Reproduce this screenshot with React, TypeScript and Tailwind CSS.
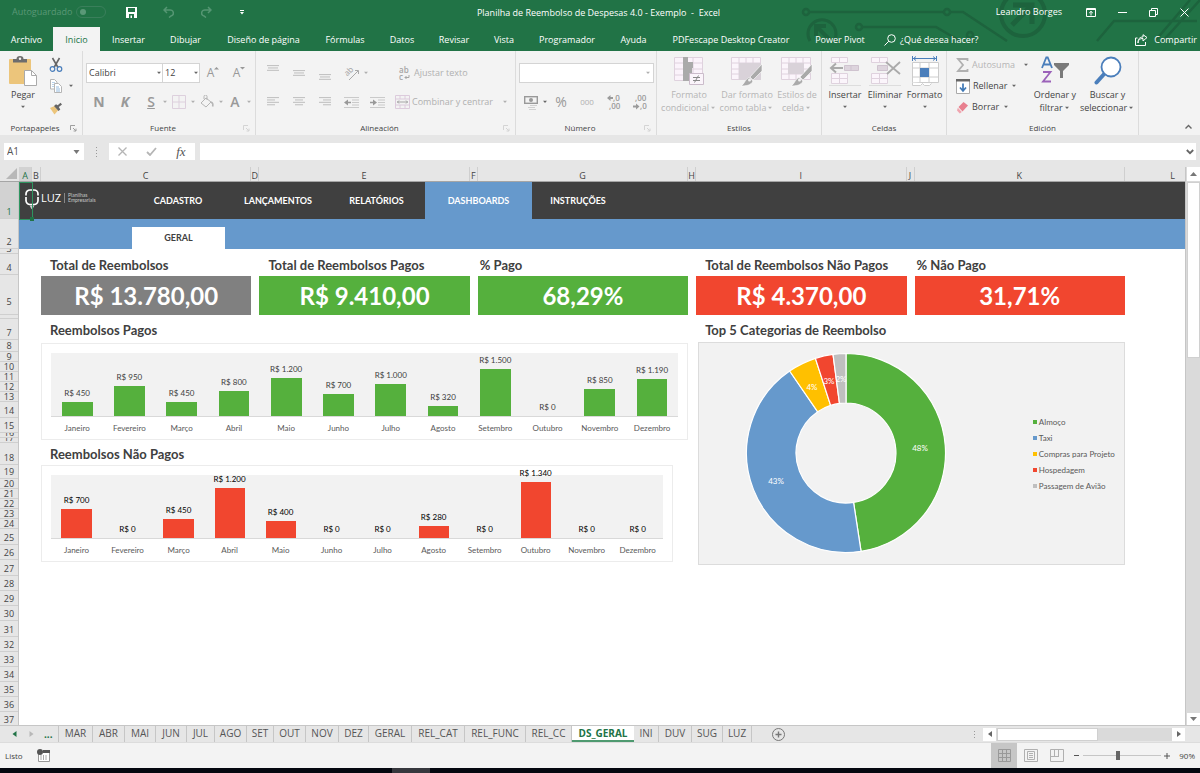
import type { ReactNode } from 'react';

/* ------------------------------------------------------------------ data */

const MENU: { label: string; width: string; active?: boolean }[] = [
  { label: 'Archivo', width: 'w-[53px]' },
  { label: 'Inicio', width: 'w-[47px]', active: true },
  { label: 'Insertar', width: 'w-[57px]' },
  { label: 'Dibujar', width: 'w-[57px]' },
  { label: 'Diseño de página', width: 'w-[99px]' },
  { label: 'Fórmulas', width: 'w-16' },
  { label: 'Datos', width: 'w-[50px]' },
  { label: 'Revisar', width: 'w-[54px]' },
  { label: 'Vista', width: 'w-[46px]' },
  { label: 'Programador', width: 'w-20' },
  { label: 'Ayuda', width: 'w-[53px]' },
  { label: 'PDFescape Desktop Creator', width: 'w-[142px]' },
  { label: 'Power Pivot', width: 'w-[76px]' },
];

const SHORT = 'h-2.5 leading-[9px]';
const NORMAL = 'h-[15px] leading-3';

const ROWS: [string, string][] = [
  ['1', 'h-[37px] leading-3'], ['2', 'h-[30px] leading-3'], ['3', 'h-[5px] leading-[9px]'], ['4', 'h-[21px] leading-3'], ['5', 'h-10 leading-6'],
  ['', 'h-1'], ['7', 'h-[21px] leading-3'], ['8', 'h-3 leading-[11px]'], ['9', SHORT], ['10', SHORT],
  ['11', SHORT], ['12', SHORT], ['13', SHORT], ['14', 'h-4 leading-3'], ['15', NORMAL],
  ['16', 'h-[5px] leading-[9px]'], ['17', 'h-[5px] leading-[9px]'], ['18', 'h-[22px] leading-3'], ['19', 'h-[14px] leading-3'], ['20', SHORT],
  ['21', SHORT], ['22', SHORT], ['23', SHORT], ['24', SHORT], ['25', 'h-4 leading-3'],
  ['26', NORMAL], ['27', 'h-4 leading-3'], ['28', NORMAL], ['29', NORMAL], ['30', NORMAL],
  ['31', 'h-4 leading-3'], ['32', NORMAL], ['33', NORMAL], ['34', NORMAL], ['35', NORMAL],
  ['36', NORMAL], ['37', NORMAL],
];

const SHEETS: { label: string; width: string; active?: boolean }[] = [
  { label: 'MAR', width: 'w-[34px]' },
  { label: 'ABR', width: 'w-8' },
  { label: 'MAI', width: 'w-[31px]' },
  { label: 'JUN', width: 'w-[31px]' },
  { label: 'JUL', width: 'w-7' },
  { label: 'AGO', width: 'w-8' },
  { label: 'SET', width: 'w-[27px]' },
  { label: 'OUT', width: 'w-8' },
  { label: 'NOV', width: 'w-[33px]' },
  { label: 'DEZ', width: 'w-[30px]' },
  { label: 'GERAL', width: 'w-[43px]' },
  { label: 'REL_CAT', width: 'w-[53px]' },
  { label: 'REL_FUNC', width: 'w-[61px]' },
  { label: 'REL_CC', width: 'w-[46px]' },
  { label: 'DS_GERAL', width: 'w-[62px]', active: true },
  { label: 'INI', width: 'w-[25px]' },
  { label: 'DUV', width: 'w-[33px]' },
  { label: 'SUG', width: 'w-[31px]' },
  { label: 'LUZ', width: 'w-[29px]' },
];

const MONTHS = ['Janeiro', 'Fevereiro', 'Março', 'Abril', 'Maio', 'Junho', 'Julho', 'Agosto', 'Setembro', 'Outubro', 'Novembro', 'Dezembro'];
const PAID = [450, 950, 450, 800, 1200, 700, 1000, 320, 1500, 0, 850, 1190];
const UNPAID = [700, 0, 450, 1200, 400, 0, 0, 280, 0, 1340, 0, 0];

const KPIS = [
  { title: 'Total de Reembolsos', value: 'R$ 13.780,00', titleStyle: 'col-start-3 pl-[9px]', style: 'bg-[#808080] col-start-3' },
  { title: 'Total de Reembolsos Pagos', value: 'R$ 9.410,00', titleStyle: 'col-start-5 pl-[9px]', style: 'bg-[#55b03d] col-start-5' },
  { title: '% Pago', value: '68,29%', titleStyle: 'col-start-7 pl-0.5', style: 'bg-[#55b03d] col-start-7' },
  { title: 'Total de Reembolsos Não Pagos', value: 'R$ 4.370,00', titleStyle: 'col-start-9 pl-[9px]', style: 'bg-[#f1462f] col-start-9' },
  { title: '% Não Pago', value: '31,71%', titleStyle: 'col-start-11 pl-0.5', style: 'bg-[#f1462f] col-start-11' },
];

const SLICES = [
  { label: 'Almoço', pct: '48%', from: 0, to: 171.3, color: '#55b03d', dot: 'bg-[#55b03d]', x: 74, y: -5 },
  { label: 'Taxi', pct: '43%', from: 171.3, to: 325.5, color: '#6699cc', dot: 'bg-[#6699cc]', x: -70, y: 28 },
  { label: 'Compras para Projeto', pct: '4%', from: 325.5, to: 342.1, color: '#ffc000', dot: 'bg-[#ffc000]', x: -34, y: -66 },
  { label: 'Hospedagem', pct: '3%', from: 342.1, to: 352.5, color: '#f1462f', dot: 'bg-[#f1462f]', x: -17, y: -72 },
  { label: 'Passagem de Avião', pct: '2%', from: 352.5, to: 360, color: '#bfbfbf', dot: 'bg-[#bfbfbf]', x: -5, y: -74 },
];

const SHEET_COLS = 'grid grid-cols-[13px_9px_210fr_8px_210fr_8px_210fr_8px_210fr_8px_210fr_60fr]';

const money = (n: number) => 'R$ ' + n.toString().replace(/(\d)(\d{3})$/, '$1.$2');

/* --------------------------------------------------------------- helpers */

function Arrow({ className = 'text-[#666]' }: { className?: string }) {
  return (
    <svg width="8" height="4" viewBox="0 0 8 4" className={className}>
      <path d="M2 0.8h4L4 3z" fill="currentColor" />
    </svg>
  );
}

function Launcher({ className }: { className: string }) {
  return (
    <svg width="7" height="7" viewBox="0 0 7 7" className={className} fill="none" stroke="currentColor">
      <path d="M0.5 5V0.5H5M3 3l2.500 2.500M6 3.6v2.4H3.6" strokeWidth=".8" />
    </svg>
  );
}

function Group({ label, className, launcher, children }: { label: string; className: string; launcher?: string; children: ReactNode }) {
  return (
    <section className={`${className} flex shrink-0 flex-col border-r border-[#dcdcdc]`}>
      <div className="flex h-[70px]">{children}</div>
      <div className="flex h-[14px] items-center">
        <h2 className="flex-1 text-center text-[8px] leading-3 text-[#444]">{label}</h2>
        {launcher && <button aria-label={`Opciones de ${label}`} className="w-3"><Launcher className={launcher} /></button>}
      </div>
    </section>
  );
}

function Tool({ label, className = 'w-[26px]', children }: { label: string; className?: string; children: ReactNode }) {
  return (
    <button aria-label={label} className={`${className} flex h-5 shrink-0 items-center justify-center`}>
      {children}
    </button>
  );
}

function SplitTool({ label, arrow = 'text-[#b0b0b0]', children }: { label: string; arrow?: string; children: ReactNode }) {
  return (
    <button aria-label={label} className="flex h-5 w-7 shrink-0 items-center">
      <span className="flex w-5 justify-center">{children}</span>
      <Arrow className={arrow} />
    </button>
  );
}

function BigButton({ icon, lines, className, arrowInline, muted }: { icon: ReactNode; lines: string[]; className: string; arrowInline?: boolean; muted?: boolean }) {
  return (
    <button className={`${className} flex shrink-0 flex-col items-center whitespace-nowrap pt-1 text-[9px] leading-[13px]`}>
      <span className="flex h-[33px] items-start pt-px">{icon}</span>
      <span>{lines[0]}</span>
      {arrowInline ? (
        <span className="flex items-center">{lines[1]}<Arrow className={muted ? 'text-[#b5b5b5]' : 'text-[#666]'} /></span>
      ) : (
        <span className="flex h-3 items-center"><Arrow /></span>
      )}
    </button>
  );
}

function Lines({ y, kind }: { y: number; kind: 'thin' | 'left' | 'center' | 'right' }) {
  const rows = kind === 'thin' ? [[0, 12], [1, 10], [0, 12]]
    : kind === 'left' ? [[0, 12], [0, 8], [0, 12], [0, 8]]
      : kind === 'center' ? [[0, 12], [2, 8], [0, 12], [2, 8]]
        : [[0, 12], [4, 8], [0, 12], [4, 8]];
  return (
    <svg width="12" height="20" viewBox="0 0 12 20" fill="#c3c3c3">
      {rows.map(([x, w], i) => <rect key={i} x={x} y={y + i * 2.4} width={w} height="1.1" />)}
    </svg>
  );
}

/* ----------------------------------------------------------------- icons */

const PasteIcon = () => (
  <svg width="30" height="32" viewBox="0 0 30 32">
    <rect x="1" y="3" width="22" height="25" rx="1" fill="#ecc57b" />
    <path d="M5 6.500V3h3.500A3.500 3 0 0 1 15.500 3H19v3.500z" fill="#6d6d6d" />
    <circle cx="12" cy="2.800" r="1.200" fill="#f3f3f3" />
    <path d="M16.500 14.500h7l5 5v10h-12z" fill="#fff" stroke="#aaa" />
    <path d="M23.500 14.500v5h5" fill="none" stroke="#aaa" />
  </svg>
);
const CutIcon = () => (
  <svg width="14" height="16" viewBox="0 0 14 16" fill="none">
    <path d="M3.500 1l5.500 9.500M10.500 1L5 10.500" stroke="#666" strokeWidth="1.600" />
    <circle cx="3.500" cy="12" r="2.300" stroke="#4a7ebb" strokeWidth="1.200" />
    <circle cx="10.500" cy="12" r="2.300" stroke="#4a7ebb" strokeWidth="1.200" />
  </svg>
);
const CopyIcon = () => (
  <svg width="14" height="16" viewBox="0 0 14 16" stroke="#b5b5b5" fill="#fff">
    <path d="M1.500 1.500h4l2.500 2.500v7h-6.500z" />
    <path d="M3 4.500h3M3 6.500h3M3 8.500h3" stroke="#b9d2ea" />
    <path d="M5.500 5.500h4l3 3v6h-7z" />
    <path d="M7 9h3M7 11h4M7 13h4" stroke="#b9d2ea" strokeWidth="1.700" />
  </svg>
);
const BrushIcon = () => (
  <svg width="14" height="13" viewBox="0 0 14 13">
    <path d="M1 6l4.500-2L9 8.500 5.500 12.500z" fill="#ecc57b" />
    <path d="M5 4l4.500 5 1.800-1.500-1.500-2.500 3.200-2.500L11.500.7 8.700 3.200 7 2.200z" fill="#666" />
  </svg>
);
const BordersIcon = () => (
  <svg width="14" height="14" viewBox="0 0 14 14" fill="none" stroke="#ddd0dd">
    <path d="M.5.5h13v13H.5zM7 0v14M0 7h14" />
  </svg>
);
const FillIcon = () => (
  <svg width="14" height="14" viewBox="0 0 14 14" fill="none" stroke="#b5b5b5">
    <path d="M1 8l5-5 5 4-5 5zM4 4V1.500a1.500 1.500 0 0 1 3 0V5" />
    <path d="M11 7c2 1 2.300 3 1.500 4.500" strokeWidth="1.600" />
  </svg>
);
const OrientationIcon = () => (
  <svg width="16" height="16" viewBox="0 0 16 16" fill="none" stroke="#a9a9a9" className="overflow-visible">
    <text x="1" y="10" transform="rotate(-45 4 8)" fontSize="8" fill="#a0a0a0" stroke="none" fontFamily="Open Sans, sans-serif">ab</text>
    <path d="M5 15l9-9M11 5.500h3.500V9" />
  </svg>
);
const IndentIcon = ({ right }: { right?: boolean }) => (
  <svg width="15" height="11" viewBox="0 0 15 11" fill="#cacaca">
    <path d="M0 0h15v1H0zM8 2.500h7v1H8zM8 5h7v1H8zM8 7.500h7v1H8zM0 10h15v1H0z" />
    {right ? <path d="M0 4.800h3V2.500L7 5.500 3 8.500V6.200H0z" fill="#999" /> : <path d="M7 4.800H4V2.500L0 5.500l4 3V6.200h3z" fill="#999" />}
  </svg>
);
const WrapIcon = () => (
  <svg width="11" height="15" viewBox="0 0 11 15" className="overflow-visible">
    <text x="0" y="7" fontSize="8" fontWeight="600" fill="#a5a5a5" fontFamily="Open Sans, sans-serif">ab</text>
    <text x="0" y="14" fontSize="8" fontWeight="600" fill="#a5a5a5" fontFamily="Open Sans, sans-serif">c</text>
    <path d="M10 9v2.500H6M7.500 10L6 11.500 7.500 13" fill="none" stroke="#a5a5a5" />
  </svg>
);
const MergeIcon = () => (
  <svg width="15" height="14" viewBox="0 0 15 14" fill="none" stroke="#dccbdc">
    <path d="M.5.5h14v13H.5zM0 4h15M0 10h15M5 0v4M10 0v4M5 10v4M10 10v4" />
    <path d="M2 7h11M4 5.500L2.500 7 4 8.500M11 5.500L12.500 7 11 8.500" stroke="#a5a5a5" />
  </svg>
);
const MoneyIcon = () => (
  <svg width="14" height="15" viewBox="0 0 14 15">
    <rect x=".7" y="1.700" width="12.600" height="6.600" fill="none" stroke="#999" strokeWidth="1.400" />
    <circle cx="7" cy="5" r="2" fill="#999" />
    <path d="M6 10h7v1H6zM4 12h7v1H4zM5 14h7v1H5z" fill="#d0d0d0" />
  </svg>
);
const DecimalIcon = ({ less }: { less?: boolean }) => (
  <svg width="16" height="18" viewBox="0 0 16 18" fill="#9b9b9b" fontFamily="Open Sans, sans-serif" fontSize="8" fontWeight="600" className="overflow-visible">
    <text x={less ? 3 : 7} y="8">{less ? ',00' : ',0'}</text>
    <text x={less ? 8 : 3} y="16">{less ? ',0' : ',00'}</text>
    {less ? <path d="M1 12.500h3v-2l3.500 3-3.500 3v-2H1z" /> : <path d="M7 4H4.500V2L1 5l3.500 3V6H7z" />}
  </svg>
);
const CondIcon = () => (
  <svg width="30" height="30" viewBox="0 0 30 30">
    <path d="M.5 1.500h28v23H.5zM0 7h29M0 13h29M0 19h29M10 1v24M19 1v24" fill="#fbf3fb" stroke="#dfd2de" />
    <path d="M9 1h5v5h5v6h-1v6h-3v7H9z" fill="#aaa" />
    <path d="M15.500 17.500h14v11h-14z" fill="#fbf5fb" stroke="#cbbccb" />
    <path d="M19 21.500h7M19 24.500h7M24.500 19.500l-4 7" stroke="#888" />
  </svg>
);
const TableFormatIcon = ({ cell }: { cell?: boolean }) => (
  <svg width="32" height="31" viewBox="0 0 32 31">
    <path d="M.5 1.500h29v22H.5zM0 7h30M0 13h30M0 18h30M8 1v23M15 1v23M22 1v23" fill="#fbf5fb" stroke="#dfd2de" />
    <path d={cell ? 'M7 7h16v11H7z' : 'M8 7h22v17H8z'} fill="#d9d2d9" />
    <path d="M31 8v7l-9 9-3-3z" fill="#aaa" stroke="#fff" strokeWidth=".6" />
    <path d="M18 21.500l4 3.500c-2 4.500-7 5-12 5 3-1 4-7 8-8.500z" fill="#aaa" stroke="#fff" strokeWidth=".6" />
    <circle cx="18.500" cy="24" r="1.500" fill="#f3f3f3" />
  </svg>
);
const InsertCellsIcon = ({ remove }: { remove?: boolean }) => (
  <svg width="32" height="30" viewBox="0 0 32 30">
    <path d="M2.500 1.500h16v5h-16zM10.500 1v6M2.500 17.500h16v10h-16zM10.500 17v11M2 22.500h17" fill="#fbf5fb" stroke="#dfd2de" />
    <path d={remove ? 'M8.500 9.500h10v5h-10z' : 'M15.500 9.500h14v5h-14zM22 9v6'} fill="#ddd4dd" stroke="#cfc3cf" />
    {remove
      ? <path d="M17 6l14 12M31 6L18 18" fill="none" stroke="#aaa" strokeWidth="1.800" />
      : <path d="M14 12H2M7 7.500L2 12l5 4.500" fill="none" stroke="#aaa" strokeWidth="2" />}
    <path d="M0 29.500h32" stroke="#ddd" />
  </svg>
);
const FormatCellsIcon = () => (
  <svg width="28" height="31" viewBox="0 0 28 31">
    <path d="M1.500 0v5M25.500 0v5M2 2.500h23M5 .5l-2.500 2 2.500 2M22 .5l2.500 2-2.500 2" fill="none" stroke="#4a7ebb" />
    <path d="M1.500 6.500h26v20H1.500zM1 12h27M1 21h27M9 6v21M18 6v21" fill="#fff" stroke="#ccc" />
    <path d="M9 12h9v9H9z" fill="#4a7ebb" />
    <path d="M1.500 26.500v3h8l2-2 2 2h5l2-2" fill="#fff" stroke="#ccc" />
  </svg>
);
const SumIcon = () => (
  <svg width="13" height="14" viewBox="0 0 13 14" fill="none" stroke="#b0b0b0" strokeWidth="1.800">
    <path d="M11.500 3V1H2l5 6-5 6h9.500v-2" />
  </svg>
);
const FillDownIcon = () => (
  <svg width="14" height="15" viewBox="0 0 14 15">
    <path d="M.5 1.500h13v13H.5z" fill="#fff" stroke="#aaa" />
    <path d="M0 0h14v2.500H0z" fill="#666" />
    <path d="M7 4.500v7M4 8.500l3 3.500 3-3.500" fill="none" stroke="#3f78b5" strokeWidth="1.700" />
  </svg>
);
const EraserIcon = () => (
  <svg width="13" height="13" viewBox="0 0 13 13">
    <path d="M7.500 1L12 4.500 6.500 10.500 2.500 6z" fill="#e8808f" />
    <path d="M1.800 6.700l4 4.300-2 1.500L1 9.500z" fill="#f0a5af" />
  </svg>
);
const SortIcon = () => (
  <svg width="28" height="28" viewBox="0 0 28 28">
    <path d="M1 12L5.300 1.500h1.400L11 12M2.800 8.500h6.400" fill="none" stroke="#4a7ebb" strokeWidth="1.800" />
    <path d="M2 16h7.500L2 25.500h8" fill="none" stroke="#9b62b9" strokeWidth="1.800" />
    <path d="M13 7h15v2l-6 6v7h-3v-7l-6-6z" fill="#7a7a7a" />
  </svg>
);
const FindIcon = () => (
  <svg width="28" height="29" viewBox="0 0 28 29">
    <path d="M2.500 26.500l9-10" stroke="#4a7ebb" strokeWidth="4" strokeLinecap="round" />
    <circle cx="17" cy="11" r="9.500" fill="#fff" stroke="#4a7ebb" strokeWidth="1.800" />
  </svg>
);

/* ---------------------------------------------------------------- header */

function Circuits() {
  return (
    <svg className="pointer-events-none absolute top-0 right-0" width="400" height="42" viewBox="0 0 400 42" fill="none" stroke="#1d633d" strokeWidth="2.500">
      <circle cx="6" cy="12" r="3" />
      <path d="M9 12h135M150 12h13l44 29" />
      <circle cx="147" cy="12" r="3" />
      <circle cx="59" cy="27" r="3" />
      <path d="M62 27h74l24 14" />
      <circle cx="170" cy="35" r="3" />
      <path d="M10 41A14 14 0 1 1 34 41" strokeWidth="3" />
      <path d="M30 40L17 27M16 36V26h10" strokeWidth="4" />
      <circle cx="223" cy="14" r="22" strokeWidth="4" />
      <path d="M212 25l18-18M213 5h19v19" strokeWidth="5" />
      <path d="M297 41l17-20h83M355 41L390 0M363 41L400 0" />
    </svg>
  );
}

function TitleBar() {
  return (
    <div className="relative flex h-[27px] items-center pb-[3px] text-[9px]">
      <label className="flex w-[107px] items-center gap-1 pl-3 text-[#5a9877]">
        Autoguardado
        <input
          type="checkbox"
          role="switch"
          className="flex h-3 w-[30px] appearance-none items-center rounded-full border border-[#3a7f5b] pl-[3px] before:size-1.5 before:rounded-full before:bg-[#5a9877]"
        />
      </label>
      <button aria-label="Guardar" className="flex w-12 justify-center">
        <svg width="11" height="11" viewBox="0 0 11 11"><path d="M0 0h11v11H0zM2 1v4h7V1zM3 7v4h1.500V8.500H6V11h2V7z" fill="#fff" fillRule="evenodd" /></svg>
      </button>
      <button aria-label="Deshacer" className="flex w-[27px] justify-center">
        <svg width="11" height="12" viewBox="0 0 11 12" fill="none" stroke="#559673" strokeWidth="1.500"><path d="M4 1L1 4l3 3M1 4h5.500a3 3 0 0 1 1.500 6L6 11.500" /></svg>
      </button>
      <button aria-label="Rehacer" className="flex w-[48px] justify-center">
        <svg width="11" height="12" viewBox="0 0 11 12" fill="none" stroke="#559673" strokeWidth="1.500"><path d="M7 1l3 3-3 3M10 4H4.500A3 3 0 0 0 3 10l2 1.500" /></svg>
      </button>
      <button aria-label="Personalizar barra" className="flex w-6 justify-center">
        <svg width="4" height="5" viewBox="0 0 4 5" fill="#fff"><path d="M0 0h4v1H0zM0 2h4L2 4.500z" /></svg>
      </button>
      <h1 className="flex-1 pt-0.5 text-center whitespace-pre">Planilha de Reembolso de Despesas 4.0 - Exemplo  -  Excel</h1>
      <div className="flex w-[257px] shrink-0 items-center">
        <span className="w-[119px] text-right">Leandro Borges</span>
        <div className="flex flex-1 items-center justify-between pr-[11px] pl-6">
          <button aria-label="Opciones de la cinta">
            <svg width="10" height="9" viewBox="0 0 10 9" fill="none" stroke="#fff"><path d="M.5.5h9v8h-9zM0 1.500h10M5 7.500V3.500M3.200 5L5 3.300 6.800 5" /></svg>
          </button>
          <button aria-label="Minimizar">
            <svg width="9" height="9" viewBox="0 0 9 9" stroke="#fff"><path d="M0 4.500h9" /></svg>
          </button>
          <button aria-label="Restaurar">
            <svg width="9" height="9" viewBox="0 0 9 9" fill="none" stroke="#fff"><path d="M.5 2.500h6v6h-6zM2.500 2V.5h6v6H7" /></svg>
          </button>
          <button aria-label="Cerrar">
            <svg width="9" height="9" viewBox="0 0 9 9" stroke="#fff"><path d="M.5.5l8 8M8.500.5l-8 8" /></svg>
          </button>
        </div>
      </div>
    </div>
  );
}

function MenuBar() {
  return (
    <nav className="relative flex h-6 items-stretch text-[9px]">
      {MENU.map((m) => (
        <button key={m.label} className={`${m.width} shrink-0 pt-0.5 whitespace-nowrap ${m.active ? 'bg-[#f3f3f3] text-[#217346]' : ''}`}>
          {m.label}
        </button>
      ))}
      <button className="flex items-center gap-1 pt-0.5 pl-1.5">
        <svg width="12" height="12" viewBox="0 0 12 12" fill="none" stroke="#fff"><circle cx="7.500" cy="4.500" r="3.800" /><path d="M4.800 7.200L.5 11.500" /></svg>
        ¿Qué desea hacer?
      </button>
      <button className="ml-auto flex items-center gap-1.5 pt-0.5 pr-[3px]">
        <svg width="13" height="12" viewBox="0 0 13 12" fill="none" stroke="#fff"><path d="M2.500 4H.5v7.500h10V8M3 9c.3-3.500 2-4.500 5-4.500V7l4-3.500L8 .7V3C4.500 3 3 5 3 9z" /></svg>
        Compartir
      </button>
    </nav>
  );
}

/* ---------------------------------------------------------------- ribbon */

function Ribbon() {
  return (
    <div className="flex h-[84px] bg-[#f3f3f3] text-[#444]">
      <Group label="Portapapeles" className="w-[83px]" launcher="text-[#888]">
        <button className="flex w-[46px] flex-col items-center pt-[5px] text-[9px] leading-3">
          <PasteIcon />
          <span className="mt-px">Pegar</span>
          <span className="flex h-3 items-center"><Arrow /></span>
        </button>
        <div className="flex flex-col items-start gap-1 pt-1.5 pl-[3px]">
          <button aria-label="Cortar"><CutIcon /></button>
          <button aria-label="Copiar" className="flex items-center gap-1 pt-px"><CopyIcon /><Arrow /></button>
          <button aria-label="Copiar formato" className="pt-1"><BrushIcon /></button>
        </div>
      </Group>

      <Group label="Fuente" className="w-[173px]" launcher="text-[#ccc]">
        <div className="flex flex-col gap-[9px] pt-3 pl-[3px]">
          <div className="flex items-center">
            <div className="relative flex items-center">
              <select aria-label="Fuente" className="h-5 w-[77px] appearance-none border border-[#d4d4d4] bg-white pl-0.5 text-[9px]"><option>Calibri</option></select>
              <span className="pointer-events-none absolute right-0"><Arrow /></span>
            </div>
            <div className="relative flex items-center">
              <select aria-label="Tamaño" className="-ml-px h-5 w-[38px] appearance-none border border-[#d4d4d4] bg-white pl-0.5 text-[9px]"><option>12</option></select>
              <span className="pointer-events-none absolute right-0"><Arrow /></span>
            </div>
            <Tool label="Aumentar tamaño">
              <span className="text-xs text-[#999]">A</span>
              <svg width="5" height="12" viewBox="0 0 5 12" fill="#999"><path d="M2.500 0L5 2.500H0z" /></svg>
            </Tool>
            <Tool label="Reducir tamaño">
              <span className="text-xs text-[#999]">A</span>
              <svg width="5" height="12" viewBox="0 0 5 12" fill="#999"><path d="M0 0h5L2.500 2.500z" /></svg>
            </Tool>
          </div>
          <div className="flex gap-[3px] text-sm text-[#999]">
            <div className="flex">
              <Tool label="Negrita"><b>N</b></Tool>
              <Tool label="Cursiva"><b className="italic">K</b></Tool>
            </div>
            <div className="flex">
              <SplitTool label="Subrayado"><span className="font-semibold underline">S</span></SplitTool>
              <SplitTool label="Bordes"><BordersIcon /></SplitTool>
              <SplitTool label="Color de relleno"><FillIcon /></SplitTool>
              <SplitTool label="Color de fuente"><span className="font-semibold">A</span></SplitTool>
            </div>
          </div>
        </div>
      </Group>

      <Group label="Alineación" className="w-[260px]" launcher="text-[#ccc]">
        <div className="flex flex-col gap-[9px] pt-3 pl-1">
          <div className="flex">
            <Tool label="Alinear arriba"><Lines y={2} kind="thin" /></Tool>
            <Tool label="Alinear en medio"><Lines y={7} kind="thin" /></Tool>
            <Tool label="Alinear abajo"><Lines y={11} kind="thin" /></Tool>
            <div className="pl-1"><SplitTool label="Orientación"><OrientationIcon /></SplitTool></div>
          </div>
          <div className="flex">
            <Tool label="Alinear a la izquierda"><Lines y={5} kind="left" /></Tool>
            <Tool label="Centrar"><Lines y={5} kind="center" /></Tool>
            <Tool label="Alinear a la derecha"><Lines y={5} kind="right" /></Tool>
            <Tool label="Disminuir sangría"><IndentIcon /></Tool>
            <Tool label="Aumentar sangría"><IndentIcon right /></Tool>
          </div>
        </div>
        <div className="flex flex-col items-start gap-[9px] pt-3 pl-[5px] text-[9px] text-[#b0b0b0]">
          <button className="flex h-5 items-center gap-1 pl-1"><WrapIcon />Ajustar texto</button>
          <button className="flex h-5 items-center gap-0.5 whitespace-nowrap"><MergeIcon />Combinar y centrar<span className="pl-1.5"><Arrow className="text-[#b0b0b0]" /></span></button>
        </div>
      </Group>

      <Group label="Número" className="w-[141px]" launcher="text-[#ccc]">
        <div className="flex flex-col gap-[9px] pt-3 pl-[3px]">
          <div className="relative flex items-center">
            <select aria-label="Formato de número" className="h-5 w-[135px] appearance-none border border-[#d4d4d4] bg-white text-[9px]"><option></option></select>
            <span className="pointer-events-none absolute right-0.5"><Arrow className="text-[#b0b0b0]" /></span>
          </div>
          <div className="flex pl-0.5 text-[#999]">
            <SplitTool label="Formato de contabilidad" arrow="text-[#666]"><MoneyIcon /></SplitTool>
            <Tool label="Porcentaje" className="w-6"><span className="text-sm">%</span></Tool>
            <Tool label="Millares" className="w-7"><span className="text-[8px] text-[#b0b0b0]">000</span></Tool>
            <Tool label="Aumentar decimales"><DecimalIcon /></Tool>
            <Tool label="Disminuir decimales"><DecimalIcon less /></Tool>
          </div>
        </div>
      </Group>

      <Group label="Estilos" className="w-[165px]">
        <div className="flex text-[#b5b5b5]">
          <BigButton className="w-16" icon={<CondIcon />} lines={['Formato', 'condicional']} arrowInline muted />
          <BigButton className="w-[52px]" icon={<TableFormatIcon />} lines={['Dar formato', 'como tabla']} arrowInline muted />
          <BigButton className="w-[48px]" icon={<TableFormatIcon cell />} lines={['Estilos de', 'celda']} arrowInline muted />
        </div>
      </Group>

      <Group label="Celdas" className="w-[125px]">
        <div className="flex pl-[3px]">
          <BigButton className="w-10" icon={<InsertCellsIcon />} lines={['Insertar']} />
          <BigButton className="w-10" icon={<InsertCellsIcon remove />} lines={['Eliminar']} />
          <BigButton className="w-[39px]" icon={<FormatCellsIcon />} lines={['Formato']} />
        </div>
      </Group>

      <Group label="Edición" className="w-[192px]">
        <div className="flex w-[81px] flex-col items-start gap-px pt-1 pl-[9px] text-[9px]">
          <button className="flex h-5 items-center gap-[3px] text-[#b5b5b5]"><SumIcon />Autosuma<span className="pl-1"><Arrow /></span></button>
          <button className="flex h-5 items-center gap-[3px]"><FillDownIcon />Rellenar<Arrow /></button>
          <button className="flex h-5 items-center gap-[3px]"><EraserIcon />Borrar<Arrow /></button>
        </div>
        <BigButton className="w-[54px]" icon={<SortIcon />} lines={['Ordenar y', 'filtrar']} arrowInline />
        <BigButton className="w-[51px]" icon={<FindIcon />} lines={['Buscar y', 'seleccionar']} arrowInline />
      </Group>

      <div className="flex flex-1 items-end justify-end pr-2 pb-0.5">
        <button aria-label="Contraer la cinta">
          <svg width="7" height="10" viewBox="0 0 7 10" fill="none" stroke="#666" strokeWidth="1.400"><path d="M.5 5.500l3-3 3 3" /></svg>
        </button>
      </div>
    </div>
  );
}

function FormulaBar() {
  return (
    <div className="flex h-[17px] items-center gap-[5px] pr-1 pl-1 text-[#555]">
      <div className="relative flex h-full w-20 items-center bg-white">
        <input aria-label="Cuadro de nombres" defaultValue="A1" className="w-14 bg-transparent pl-[3px] text-[10px] outline-none" />
        <svg className="absolute right-1" width="7" height="4" viewBox="0 0 7 4" fill="#777"><path d="M.5 0h6L3.500 4z" /></svg>
      </div>
      <div className="flex w-[15px] flex-col items-center gap-[2px]">
        <span className="size-px bg-[#999]" /><span className="size-px bg-[#999]" /><span className="size-px bg-[#999]" /><span className="size-px bg-[#999]" />
      </div>
      <div className="flex h-full w-[86px] items-center justify-around bg-white">
        <button aria-label="Cancelar"><svg width="9" height="9" viewBox="0 0 9 9" stroke="#b5b5b5" strokeWidth="1.300"><path d="M.5.5l8 8M8.500.5l-8 8" /></svg></button>
        <button aria-label="Introducir"><svg width="11" height="9" viewBox="0 0 11 9" fill="none" stroke="#b5b5b5" strokeWidth="1.800"><path d="M1 5l3 3 6-7" /></svg></button>
        <button aria-label="Insertar función" className="font-['Liberation_Serif',serif] text-[13px] leading-4 italic">fx</button>
      </div>
      <div className="flex h-full flex-1 items-center bg-white">
        <input aria-label="Barra de fórmulas" className="min-w-0 flex-1 bg-transparent px-1 text-[10px] outline-none" />
        <button aria-label="Expandir" className="pr-0.5"><svg width="8" height="6" viewBox="0 0 8 6" fill="none" stroke="#666" strokeWidth="1.800"><path d="M.8 1L4 4.200 7.200 1" /></svg></button>
      </div>
    </div>
  );
}

/* ----------------------------------------------------------------- sheet */

function BarChart({ values, scale, barColor, labelColor, className }: { values: number[]; scale: number; barColor: string; labelColor: string; className: string }) {
  return (
    <div className={`${className} h-[97px] border border-[#ececec] bg-white px-[9px] pt-[9px] text-[8px] leading-[10px]`}>
      <div className="flex h-16 items-end border-b border-[#d9d9d9] bg-[#f2f2f2]">
        {values.map((v, i) => (
          <div key={MONTHS[i]} className="flex flex-1 flex-col items-center">
            <span className={`${labelColor} mb-1 whitespace-nowrap`}>{money(v)}</span>
            <div className={`${barColor} w-[59%]`} style={{ height: Math.round(v * scale) }} />
          </div>
        ))}
      </div>
      <div className="flex h-[21px] items-center text-[#595959]">
        {MONTHS.map((m) => <span key={m} className="flex-1 text-center">{m}</span>)}
      </div>
    </div>
  );
}

function arc(from: number, to: number, outer: number, inner: number) {
  const p = (deg: number, r: number) => {
    const a = ((deg - 90) * Math.PI) / 180;
    return `${(r * Math.cos(a)).toFixed(2)} ${(r * Math.sin(a)).toFixed(2)}`;
  };
  const big = to - from > 180 ? 1 : 0;
  return `M${p(from, outer)}A${outer} ${outer} 0 ${big} 1 ${p(to, outer)}L${p(to, inner)}A${inner} ${inner} 0 ${big} 0 ${p(from, inner)}Z`;
}

function DonutPanel() {
  return (
    <div className="flex h-[223px] items-center justify-between border border-[#dcdcdc] bg-[#f2f2f2] pr-[9px] pb-0.5 pl-[46px]">
      <svg width="202" height="202" viewBox="-101 -101 202 202" role="img" aria-label="Top 5 Categorias de Reembolso">
        {SLICES.map((s) => <path key={s.label} d={arc(s.from, s.to, 99.5, 50)} fill={s.color} stroke="#fff" strokeWidth="1.200" />)}
        {SLICES.map((s) => (
          <text key={s.label} x={s.x} y={s.y + 3} textAnchor="middle" fontSize="8" fill="#fff" fontFamily="Lato, sans-serif">{s.pct}</text>
        ))}
      </svg>
      <ul className="flex flex-col pt-0.5 text-[8px] leading-4 text-[#595959]">
        {SLICES.map((s) => (
          <li key={s.label} className="flex items-center gap-0.5"><span className={`${s.dot} size-1`} />{s.label}</li>
        ))}
      </ul>
    </div>
  );
}

function NavBar() {
  return (
    <nav className="flex h-[37px] bg-[#404040] text-[9px] font-bold text-white">
      <div className="flex w-[109px] items-start pt-[7px] pl-1.5">
        <svg width="14" height="21" viewBox="0 0 14 21" fill="none" stroke="#fff" strokeWidth="1.700">
          <path d="M1 6.500V5a4 4 0 0 1 4-4h4a4 4 0 0 1 4 4v1.500M13 8v3.500a4 4 0 0 1-4 4H5a4 4 0 0 1-4-4V8" />
          <path d="M4.500 16.500h5L7.500 20h-1z" fill="#ccc" stroke="none" />
        </svg>
        <span className="pt-[3px] pl-[2px] font-['Open_Sans',sans-serif] text-[11px] leading-3 font-normal">LUZ</span>
        <span className="mt-1 ml-[3px] border-l border-[#888] pl-[3px] text-[5px] leading-[5px] font-normal text-[#c8c8c8]">Planilhas<br />Empresariais</span>
      </div>
      <button className="w-[100px]">CADASTRO</button>
      <button className="w-[100px]">LANÇAMENTOS</button>
      <button className="w-[97px]">RELATÓRIOS</button>
      <button className="w-[107px] bg-[#6699cc]">DASHBOARDS</button>
      <button className="w-[92px]">INSTRUÇÕES</button>
    </nav>
  );
}

function Dashboard() {
  const heading = 'text-[13px] leading-[21px] font-bold whitespace-nowrap';
  return (
    <main className="relative min-w-0 flex-1 bg-white font-[Lato,sans-serif] text-[#404040]">
      <NavBar />
      <div className="flex h-[30px] items-end bg-[#6699cc] pl-[113px]">
        <button className="h-[22px] w-[93px] bg-white text-[9px] font-bold">GERAL</button>
      </div>
      <div className={`${SHEET_COLS} pt-1.5`}>
        {KPIS.map((k) => <h3 key={k.title} className={`${k.titleStyle} ${heading} row-start-1`}>{k.title}</h3>)}
        {KPIS.map((k) => (
          <p key={k.title} className={`${k.style} row-start-2 h-[39px] text-center text-2xl leading-[39px] font-bold text-white`}>{k.value}</p>
        ))}
      </div>
      <div className={`${SHEET_COLS} pt-[5px]`}>
        <section className="col-start-3 col-end-8">
          <h3 className={`${heading} pl-[9px]`}>Reembolsos Pagos</h3>
          <BarChart className="mt-0.5" values={PAID} scale={0.0315} barColor="bg-[#55b03d]" labelColor="text-[#404040]" />
          <h3 className={`${heading} mt-1 pl-[9px]`}>Reembolsos Não Pagos</h3>
          <BarChart className="mr-[15px]" values={UNPAID} scale={0.0417} barColor="bg-[#f1462f]" labelColor="text-black" />
        </section>
        <section className="col-start-9 col-end-12">
          <h3 className={`${heading} pl-[9px]`}>Top 5 Categorias de Reembolso</h3>
          <div className="mt-px ml-0.5"><DonutPanel /></div>
        </section>
      </div>
      <div className="pointer-events-none absolute top-0 left-0 h-[38px] w-[14px] border border-[#2e9560]">
        <span className="absolute -right-0.5 -bottom-0.5 size-1 bg-[#217346]" />
      </div>
    </main>
  );
}

function Sheet() {
  const head = 'flex items-end justify-center border-r border-[#cfcfcf]';
  return (
    <div className="flex min-h-0 flex-1">
      <div className="flex min-w-0 flex-1 flex-col">
        <div className="flex h-[15px] shrink-0 border-b border-[#a5a5a5] text-[9px] leading-[11px]">
          <div className="flex w-[19px] items-end justify-end pr-0.5 pb-0.5">
            <svg width="11" height="11" viewBox="0 0 11 11" fill="#b8b8b8"><path d="M11 0v11H0z" /></svg>
          </div>
          <div className={`${SHEET_COLS} flex-1`}>
            <span className={`${head} bg-[#d2d2d2] text-[#217346]`}>A</span>
            {['B', 'C', 'D', 'E', 'F', 'G', 'H', 'I', 'J', 'K'].map((c) => <span key={c} className={head}>{c}</span>)}
            <span className="flex items-end justify-end pr-2.5">L</span>
          </div>
        </div>
        <div className="flex min-h-0 flex-1 overflow-hidden">
          <div className="w-[19px] shrink-0 border-r border-[#c6c6c6] text-center text-[9px]">
            {ROWS.map(([n, style], i) => (
              <div key={i} className={`${style} flex items-end justify-center overflow-hidden border-b border-[#cfcfcf] ${i === 0 ? 'bg-[#d2d2d2] text-[#217346]' : ''}`}>{n}</div>
            ))}
          </div>
          <Dashboard />
        </div>
      </div>
      <div className="flex w-[15px] flex-col items-center border-l border-[#c6c6c6] bg-[#dadada]">
        <button aria-label="Desplazar arriba" className="flex h-[14px] w-[13px] items-center justify-center bg-white">
          <svg width="7" height="4" viewBox="0 0 7 4" fill="#777"><path d="M0 4h7L3.500 0z" /></svg>
        </button>
        <div className="mt-px h-[176px] w-[13px] border border-[#d0d0d0] bg-white" />
        <button aria-label="Desplazar abajo" className="mt-auto flex h-3 w-[13px] items-center justify-center bg-white">
          <svg width="7" height="4" viewBox="0 0 7 4" fill="#777"><path d="M0 0h7L3.500 4z" /></svg>
        </button>
      </div>
    </div>
  );
}

function SheetTabs() {
  return (
    <div className="flex h-[17px] shrink-0 border-t border-[#c6c6c6] text-[10px] text-[#555]">
      <div className="flex w-[59px] items-center gap-3 border-r border-[#c6c6c6] pl-3">
        <button aria-label="Hoja anterior"><svg width="5" height="6" viewBox="0 0 5 6" fill="#217346"><path d="M4.500 0v6L.5 3z" /></svg></button>
        <button aria-label="Hoja siguiente"><svg width="5" height="6" viewBox="0 0 5 6" fill="#b8b8b8"><path d="M.5 0v6l4-3z" /></svg></button>
        <button className="-ml-0.5 leading-3 font-bold text-[#217346]">...</button>
      </div>
      {SHEETS.map((s) => (
        <button
          key={s.label}
          className={`${s.width} shrink-0 leading-[13px] whitespace-nowrap ${s.active ? 'border-b-2 border-[#4f9a70] bg-white font-bold text-[#217346]' : 'border-r border-[#c6c6c6] pb-px'}`}
        >
          {s.label}
        </button>
      ))}
      <button aria-label="Nueva hoja" className="ml-5">
        <svg width="13" height="13" viewBox="0 0 13 13" fill="none" stroke="#777"><circle cx="6.500" cy="6.500" r="6" /><path d="M6.500 3.500v6M3.500 6.500h6" strokeWidth="1.400" /></svg>
      </button>
      <div className="ml-auto flex items-center gap-2 pr-[15px]">
        <span className="flex flex-col gap-[2px]"><i className="size-px bg-[#999]" /><i className="size-px bg-[#999]" /><i className="size-px bg-[#999]" /></span>
        <div className="flex h-[13px] w-[202px] bg-[#dadada]">
          <button aria-label="Desplazar a la izquierda" className="flex w-[13px] items-center justify-center bg-white"><svg width="4" height="6" viewBox="0 0 4 6" fill="#666"><path d="M4 0v6L0 3z" /></svg></button>
          <div className="ml-px w-[101px] border border-[#d0d0d0] bg-white" />
          <button aria-label="Desplazar a la derecha" className="ml-auto flex w-[13px] items-center justify-center bg-white"><svg width="4" height="6" viewBox="0 0 4 6" fill="#666"><path d="M0 0v6l4-3z" /></svg></button>
        </div>
      </div>
    </div>
  );
}

function StatusBar() {
  return (
    <footer className="flex h-[26px] shrink-0 items-center border-t border-[#dcdcdc] bg-[#f3f3f3] text-[8px] text-[#444]">
      <span className="w-[37px] pl-[5px]">Listo</span>
      <button aria-label="Grabar macro">
        <svg width="13" height="13" viewBox="0 0 13 13"><path d="M1.500 2.500h11v10h-11z" fill="#fff" stroke="#999" /><path d="M6 1h7v3H6z" fill="#555" /><path d="M4 6v5M6.500 6v5M9 6v5" stroke="#aaa" /><circle cx="3" cy="3" r="3" fill="#555" /></svg>
      </button>
      <div className="ml-auto flex h-full items-center">
        <button aria-label="Normal" className="flex h-full w-[26px] items-center justify-center bg-[#c6c6c6]">
          <svg width="13" height="13" viewBox="0 0 13 13" fill="none" stroke="#999"><path d="M.5.5h12v12H.5zM4.500 0v13M8.500 0v13M0 4.500h13M0 8.500h13" /></svg>
        </button>
        <button aria-label="Diseño de página" className="flex w-[27px] justify-center">
          <svg width="14" height="13" viewBox="0 0 14 13" fill="none" stroke="#b0b0b0"><path d="M.5.5h13v12H.5zM3.500 2.500h7v8h-7zM5 4.500h4M5 6.500h4M5 8.500h4" /></svg>
        </button>
        <button aria-label="Vista previa de salto de página" className="flex w-[26px] justify-center">
          <svg width="14" height="13" viewBox="0 0 14 13" fill="none" stroke="#b0b0b0"><path d="M.5.5h13v12H.5zM4.500 0v7M8.500 0v7M0 7.500h9" /></svg>
        </button>
        <button aria-label="Alejar" className="flex w-[13px] justify-center"><span className="h-px w-[5px] bg-[#555]" /></button>
        <input
          type="range"
          aria-label="Zoom"
          min="10"
          max="170"
          defaultValue="82"
          className="h-2.5 w-[78px] appearance-none bg-[linear-gradient(#c6c6c6,#c6c6c6)] bg-[length:100%_1px] bg-center bg-no-repeat [&::-webkit-slider-thumb]:h-[9px] [&::-webkit-slider-thumb]:w-1 [&::-webkit-slider-thumb]:appearance-none [&::-webkit-slider-thumb]:bg-[#666]"
        />
        <button aria-label="Acercar" className="flex w-3 justify-center"><svg width="6" height="6" viewBox="0 0 6 6" stroke="#555"><path d="M0 3h6M3 0v6" /></svg></button>
        <span className="w-[27px] pr-[5px] text-right">90%</span>
      </div>
    </footer>
  );
}

export default function App() {
  return (
    <div className="flex h-screen flex-col overflow-hidden bg-[#e6e6e6] font-['Open_Sans',sans-serif] text-[#444]">
      <header className="relative shrink-0 bg-[#217346] text-white">
        <Circuits />
        <TitleBar />
        <MenuBar />
        <Ribbon />
      </header>
      <div className="shrink-0 pt-2 pb-[7px]"><FormulaBar /></div>
      <Sheet />
      <SheetTabs />
      <StatusBar />
      <div className="flex h-[5px] shrink-0 bg-[#04070f]"><span className="ml-[392px] w-[38px] bg-[#36373d]" /></div>
    </div>
  );
}
